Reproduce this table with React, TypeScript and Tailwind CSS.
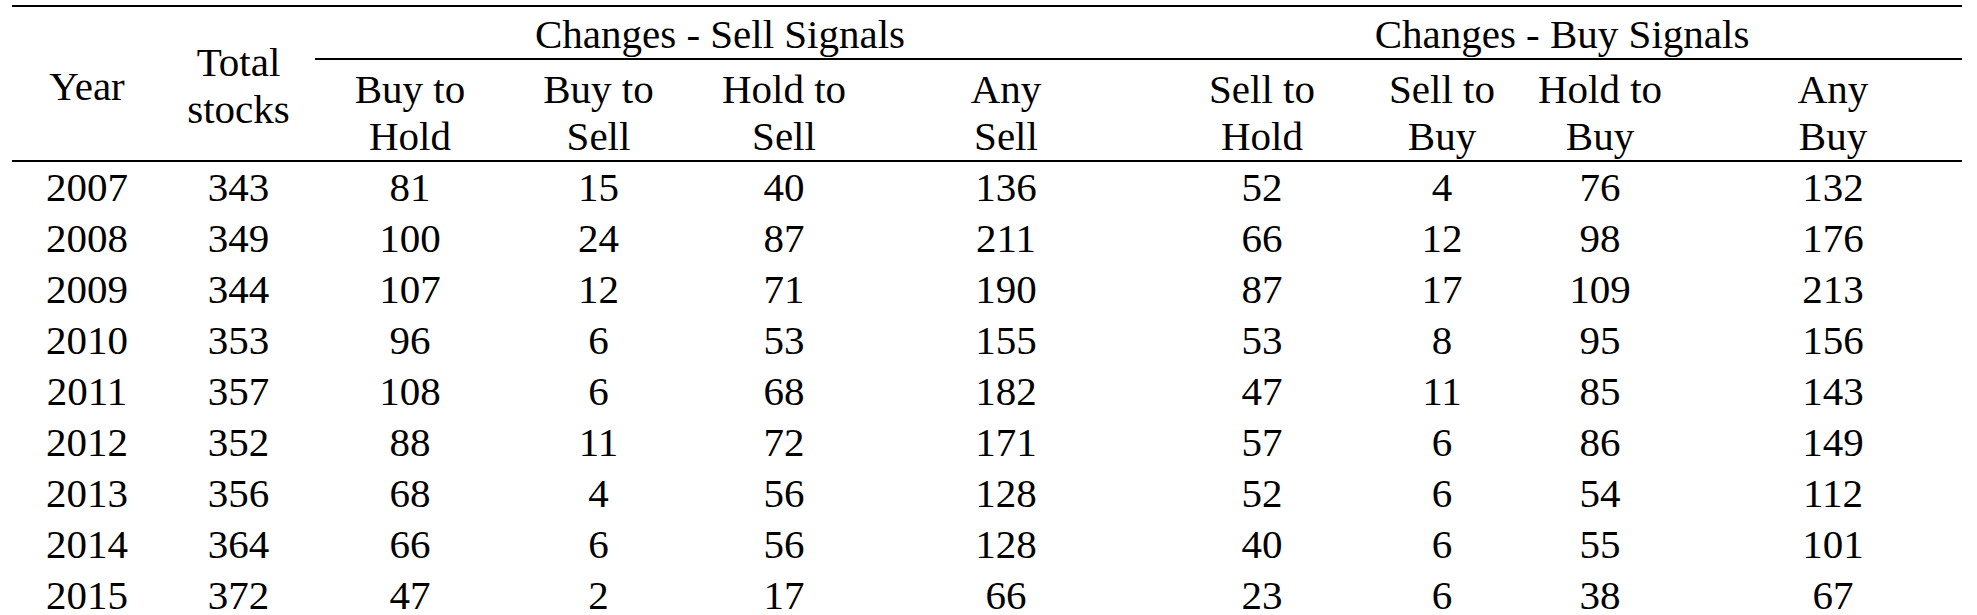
const rows = [
  ["2007", "343", "81", "15", "40", "136", "52", "4", "76", "132"],
  ["2008", "349", "100", "24", "87", "211", "66", "12", "98", "176"],
  ["2009", "344", "107", "12", "71", "190", "87", "17", "109", "213"],
  ["2010", "353", "96", "6", "53", "155", "53", "8", "95", "156"],
  ["2011", "357", "108", "6", "68", "182", "47", "11", "85", "143"],
  ["2012", "352", "88", "11", "72", "171", "57", "6", "86", "149"],
  ["2013", "356", "68", "4", "56", "128", "52", "6", "54", "112"],
  ["2014", "364", "66", "6", "56", "128", "40", "6", "55", "101"],
  ["2015", "372", "47", "2", "17", "66", "23", "6", "38", "67"],
];

const sellCols = [
  ["Buy to", "Hold"],
  ["Buy to", "Sell"],
  ["Hold to", "Sell"],
  ["Any", "Sell"],
];

const buyCols = [
  ["Sell to", "Hold"],
  ["Sell to", "Buy"],
  ["Hold to", "Buy"],
  ["Any", "Buy"],
];

// fixed column widths, table starts 12px from the left edge
const cols = "grid grid-cols-[150px_153px_190px_187px_184px_260px_252px_108px_208px_258px]";

function HeadCell({ lines }: { lines: string[] }) {
  return (
    <div className="row-start-2 h-[100px] pt-[6px] text-center leading-[47px]">
      {lines.map((l) => (
        <div key={l} className="whitespace-nowrap">{l}</div>
      ))}
    </div>
  );
}

export default function App() {
  return (
    <div className="min-h-screen bg-white pt-[5px] font-['Liberation_Serif','Times_New_Roman',serif] text-black">
      <div className="ml-[12px] w-[1950px] text-[41px]">
        <div className="h-[2px] bg-black" />

        <div className={cols}>
          <div className="col-start-1 row-span-2 row-start-1 flex items-center justify-center pt-[6px] leading-[47px]">
            Year
          </div>
          <div className="col-start-2 row-span-2 row-start-1 flex flex-col items-center justify-center pt-[4px] leading-[47px]">
            <span>Total</span>
            <span>stocks</span>
          </div>
          <div className="col-span-4 col-start-3 row-start-1 h-[53px] border-b-2 border-black pr-[11px] pt-[4px] text-center leading-[47px]">
            Changes - Sell Signals
          </div>
          <div className="col-span-4 col-start-7 row-start-1 h-[53px] border-b-2 border-black pl-[26px] pt-[4px] text-center leading-[47px]">
            Changes - Buy Signals
          </div>
          {[...sellCols, ...buyCols].map((c, i) => (
            <HeadCell key={i} lines={c} />
          ))}
        </div>

        <div className="h-[2px] bg-black" />

        {rows.map((r) => (
          <div key={r[0]} className={cols}>
            {r.map((v, i) => (
              <div key={i} className="h-[51px] text-center leading-[51px]">
                {v}
              </div>
            ))}
          </div>
        ))}
      </div>
    </div>
  );
}
